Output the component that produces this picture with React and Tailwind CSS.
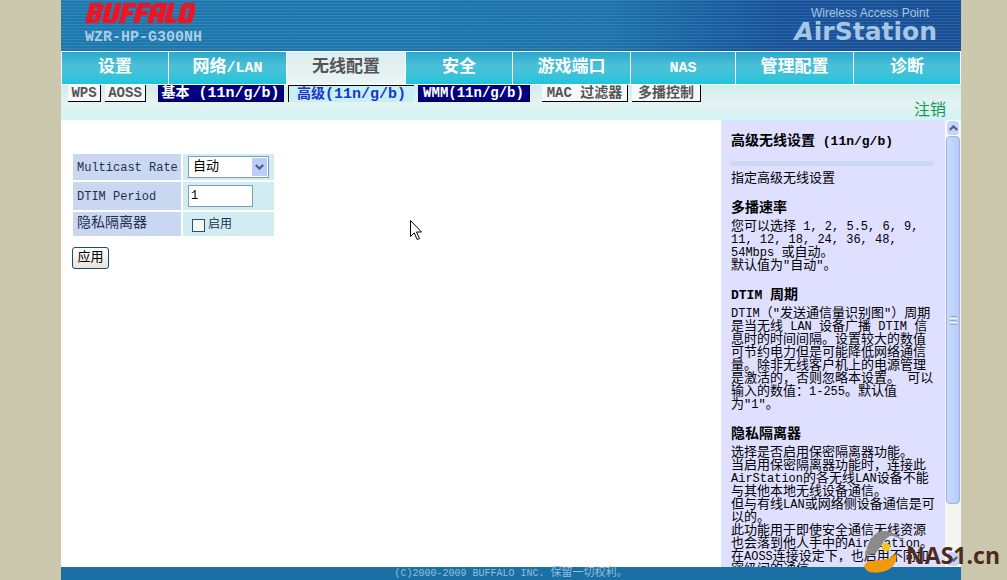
const CJK = "font-['Liberation_Mono','Noto_Sans_CJK_SC',monospace]";

const tabs = [
  { label: '设置' },
  { label: '网络/LAN' },
  { label: '无线配置', active: true },
  { label: '安全' },
  { label: '游戏端口' },
  { label: 'NAS' },
  { label: '管理配置' },
  { label: '诊断' },
];

const rateNotes = ['您可以选择 1, 2, 5.5, 6, 9,', '11, 12, 18, 24, 36, 48,', '54Mbps 或自动。', '默认值为"自动"。'];
const dtimNotes = [
  'DTIM（"发送通信量识别图"）周期',
  '是当无线 LAN 设备广播 DTIM 信',
  '息时的时间间隔。设置较大的数值',
  '可节约电力但是可能降低网络通信',
  '量。除非无线客户机上的电源管理',
  '是激活的，否则忽略本设置。 可以',
  '输入的数值：1-255。默认值',
  '为"1"。',
];
const privacyNotes = [
  '选择是否启用保密隔离器功能。',
  '当启用保密隔离器功能时，连接此',
  'AirStation的各无线LAN设备不能',
  '与其他本地无线设备通信。',
  '但与有线LAN或网络侧设备通信是可',
  '以的。',
  '此功能用于即使安全通信无线资源',
  '也会落到他人手中的AirStation。',
  '在AOSS连接设定下，也启用不同加',
  '密级间的通信。',
];

/* Sets the Latin runs of a line a size smaller than its Chinese text. */
function Mixed({ text, latin }) {
  return text.split(/([\x20-\x7e]+)/).map((run, i) =>
    i % 2 ? (
      <span key={i} className={latin}>{run}</span>
    ) : (
      run
    )
  );
}

function Section({ title, lines }) {
  return (
    <section className="mt-[13px]">
      <h3 className="h-[22px] text-[14px] leading-5 font-bold">
        <Mixed text={title} latin="text-[13px]" />
      </h3>
      {lines.map((line) => (
        <p key={line} className="h-[13px] text-[13px] leading-[13px] whitespace-pre">
          <Mixed text={line} latin="text-[12px]" />
        </p>
      ))}
    </section>
  );
}

function Chevron({ up, className }) {
  return (
    <svg viewBox="0 0 9 6" className={className} fill="none" stroke="#4d6185" strokeWidth="2.2">
      <path d={up ? 'M0.8 5 4.5 1.4 8.2 5' : 'M0.8 1 4.5 4.6 8.2 1'} />
    </svg>
  );
}

function SubLink({ children, tone }) {
  const tones = {
    dark: 'bg-[#000080] text-white border-b border-r border-[#000030]',
    current: 'bg-[#c4f2f4] text-[#2333c8] border-t border-l border-black',
    plain: 'bg-[#f4f8f8] text-[#555] border-b border-r border-black',
  };
  return (
    <a href="#" className={`flex h-[17px] shrink-0 items-center justify-center font-bold leading-4 whitespace-pre ${tones[tone]}`}>
      {children}
    </a>
  );
}

export default function App() {
  return (
    <div className={`flex h-screen flex-col overflow-hidden bg-[#ccc8ae] pr-[46px] pl-[61px] ${CJK}`}>
      <header className="flex h-[51px] shrink-0 items-start justify-between bg-[repeating-linear-gradient(to_bottom,rgba(255,255,255,0.1)_0px,rgba(255,255,255,0.1)_1px,transparent_1px,transparent_3px),linear-gradient(to_right,#1c78ad,#1c74aa_60%,#17529a_80%,#174f95)] pr-6 pl-6">
        <div>
          <svg viewBox="0 0 110 21" className="mt-[3px] h-[21px] w-[110px]" role="img" aria-label="BUFFALO">
            <g fill="#ee1424" fillRule="evenodd" transform="translate(5 0) skewX(-14)">
              <path d="M0 0H12L14.500 2.500V8L12.500 10 14.500 12V17.500L12 20H0ZM6 4V8H9V4ZM6 12V16H9V12Z" />
              <path d="M16.500 0H22.500V16H25.500V0H31.500V17.500L29 20H19L16.500 17.500Z" />
              <path d="M33.500 0H46.500V4.500H39.500V8H45.500V12.500H39.500V20H33.500Z" />
              <path d="M48 0H61V4.500H54V8H60V12.500H54V20H48Z" />
              <path d="M62 20V3L65 0H77.500V20H71.500V14H68V20ZM68 4.500V9.500H71.500V4.500Z" />
              <path d="M79 0H85V15.500H91V20H79Z" />
              <path d="M92 2.500 94.500 0H104.500L107 2.500V17.500L104.500 20H94.500L92 17.500ZM98 4.500V15.500H101V4.500Z" />
            </g>
          </svg>
          <p className="text-[15px] leading-7 font-bold text-[#a9cfe8]">WZR-HP-G300NH</p>
        </div>
        <div className="text-right font-['Liberation_Sans',sans-serif] text-[#a5c6e4]">
          <p className="mt-[6px] pr-2 text-[12px] leading-[14px]">Wireless Access Point</p>
          <p className="font-['DejaVu_Sans',sans-serif] text-[25px] leading-6 font-bold"><i>A</i>irStation</p>
        </div>
      </header>

      <nav className="grid h-[34px] shrink-0 grid-cols-[107fr_118fr_119fr_107fr_118fr_105fr_118fr_107fr] gap-px border border-white bg-white">
        {tabs.map((tab) => (
          <a
            key={tab.label}
            href="#"
            className={`flex items-center justify-center text-[17px] leading-5 font-bold ${
              tab.active
                ? 'bg-linear-to-b from-[#dceef0] to-[#eaf5f4] text-[#555]'
                : 'bg-linear-to-b from-[#2aa9cc] via-[#4cc0d8] via-45% to-[#19c6dc] text-white'
            }`}
          >
            <span><Mixed text={tab.label} latin="text-[15px]" /></span>
          </a>
        ))}
      </nav>

      <div className="flex h-[35px] shrink-0 items-start justify-between bg-linear-to-b from-[#d2ecec] via-[#e4f2f2] to-[#d2f3f4] pr-[15px] pl-[7px]">
        <div className="flex text-[14px]">
          <div className="flex gap-1">
            <SubLink tone="plain"><span className="w-8 text-center">WPS</span></SubLink>
            <SubLink tone="plain"><span className="w-10 text-center">AOSS</span></SubLink>
          </div>
          <div className="ml-3 flex gap-1">
            <SubLink tone="dark"><span className="w-[125px] text-center"><Mixed text="基本 (11n/g/b)" latin="text-[15px]" /></span></SubLink>
            <SubLink tone="current"><span className="w-[125px] text-center"><Mixed text="高级(11n/g/b)" latin="text-[15px]" /></span></SubLink>
            <SubLink tone="dark"><span className="w-[111px] text-center">WMM(11n/g/b)</span></SubLink>
          </div>
          <div className="ml-3 flex gap-1">
            <SubLink tone="plain"><span className="w-[85px] text-center">MAC 过滤器</span></SubLink>
            <SubLink tone="plain"><span className="w-[68px] text-center">多播控制</span></SubLink>
          </div>
        </div>
        <a href="#" className="pt-4 text-[16px] leading-5 text-[#159a52]">注销</a>
      </div>

      <div className="flex min-h-0 flex-1 bg-white">
        <main className="min-w-0 flex-1 pt-8 pl-[10px]">
          <form>
            <table className="border-separate border-spacing-[2px] text-[#1d3050]">
              <tbody>
                <tr className="h-[26px]">
                  <th className="w-[108px] bg-[#c9d7f1] pt-[2px] pl-1 text-left text-[12px] font-normal whitespace-nowrap">
                    <label htmlFor="rate">Multicast Rate</label>
                  </th>
                  <td className="w-[91px] bg-[#d2edf2] pl-[5px]">
                    <div className="relative w-[81px]">
                      <select id="rate" className="block h-[22px] w-full appearance-none border border-[#7f9db9] bg-white pl-1 text-[13px] leading-5 text-black">
                        <option>自动</option>
                      </select>
                      <span className="pointer-events-none absolute top-[2px] right-[2px] flex h-[18px] w-[15px] items-center justify-center bg-[#bccdf8]">
                        <Chevron className="h-[6px] w-[9px]" />
                      </span>
                    </div>
                  </td>
                </tr>
                <tr className="h-[28px]">
                  <th className="bg-[#c9d7f1] pt-[2px] pl-1 text-left text-[12px] font-normal">
                    <label htmlFor="dtim">DTIM Period</label>
                  </th>
                  <td className="bg-[#d2edf2] pl-[5px]">
                    <input id="dtim" defaultValue="1" className="block h-[22px] w-[65px] border border-[#7f9db9] bg-white px-[2px] text-[12px] text-black" />
                  </td>
                </tr>
                <tr className="h-6">
                  <th className="bg-[#c9d7f1] pb-[2px] pl-1 text-left text-[14px] leading-5 font-normal">
                    <label htmlFor="isolate">隐私隔离器</label>
                  </th>
                  <td className="bg-[#d2edf2] pt-[2px] pl-[9px]">
                    <label className="flex items-center gap-[3px] text-[12px] leading-5">
                      <input id="isolate" type="checkbox" className="size-[13px] appearance-none border border-[#1c5180] bg-[#f6f6f2]" />
                      启用
                    </label>
                  </td>
                </tr>
              </tbody>
            </table>
            <button type="button" className="mt-[9px] ml-px h-[22px] w-[37px] rounded-[3px] border border-[#1d4a70] bg-linear-to-b from-white to-[#e6e4dc] text-[13px] leading-4 text-black">
              应用
            </button>
          </form>
        </main>

        <aside className="w-[224px] shrink-0 overflow-hidden bg-[#dfdfff] pr-[11px] pl-[10px] text-black">
          <h2 className="mt-[11px] text-[14px] leading-5 font-bold">
            <Mixed text="高级无线设置 (11n/g/b)" latin="text-[13px]" />
          </h2>
          <hr className="mt-[9px] h-[5px] border-0 bg-[#cad8f1]" />
          <p className="mt-[6px] text-[13px] leading-[13px]">指定高级无线设置</p>
          <Section title="多播速率" lines={rateNotes} />
          <Section title="DTIM 周期" lines={dtimNotes} />
          <Section title="隐私隔离器" lines={privacyNotes} />
        </aside>

        <div className="flex w-4 shrink-0 flex-col border-x border-[#f4f6fb] bg-[#f6f5f0]">
          <button type="button" aria-label="Up" className="flex h-4 shrink-0 items-center justify-center rounded-sm border border-white bg-[#c5d5fb]">
            <Chevron up className="h-[6px] w-[9px]" />
          </button>
          <div className="flex flex-1 flex-col">
            <div className="flex h-[368px] flex-col items-center justify-center gap-px rounded-sm border border-[#98b4e6] bg-linear-to-r from-[#cbdafc] to-[#b7ccf7]">
              <span className="h-px w-[7px] bg-[#8fabe0]" />
              <span className="h-px w-[7px] bg-white" />
              <span className="h-px w-[7px] bg-[#8fabe0]" />
              <span className="h-px w-[7px] bg-white" />
              <span className="h-px w-[7px] bg-[#8fabe0]" />
            </div>
          </div>
          <button type="button" aria-label="Down" className="flex h-4 shrink-0 items-center justify-center rounded-sm border border-white bg-[#c5d5fb]">
            <Chevron className="h-[6px] w-[9px]" />
          </button>
        </div>
      </div>

      <footer className="h-[13px] shrink-0 bg-[#1a6fa5] text-center text-[11px] leading-[13px] whitespace-pre text-[#8fc0de]">
        <Mixed text="(C)2000-2009 BUFFALO INC. 保留一切权利。" latin="text-[10px]" />
      </footer>

      <svg viewBox="0 0 12 21" className="absolute top-[220px] left-[410px] h-[21px] w-3">
        <path d="M.5.5v16l3.700-3.600 3 6.600 2.300-1-3-6.500h5z" fill="white" stroke="black" />
      </svg>

      <div className="absolute right-[7px] bottom-[7px] flex items-end">
        <svg viewBox="30 45 129 129" className="h-[43px] w-[43px]">
          <path d="M38 123C40 88 58 50 92 48c26-1 46 14 64 34-18-14-36-22-46-18-14 6-22 26-44 54-8-1-18 1-28 5z" fill="#8b8b8b" />
          <circle cx="99" cy="96" r="13" fill="#f5c518" />
          <path d="M34 152c6-12 18-15 40-16 24 0 42-8 56-22 3 24-6 52-50 58-28 4-46-6-46-20z" fill="#f39a0b" />
        </svg>
        <span className="font-['Open_Sans',sans-serif] text-[23px] leading-9 font-bold text-[#4c2c1c]">NAS1.cn</span>
      </div>
    </div>
  );
}
